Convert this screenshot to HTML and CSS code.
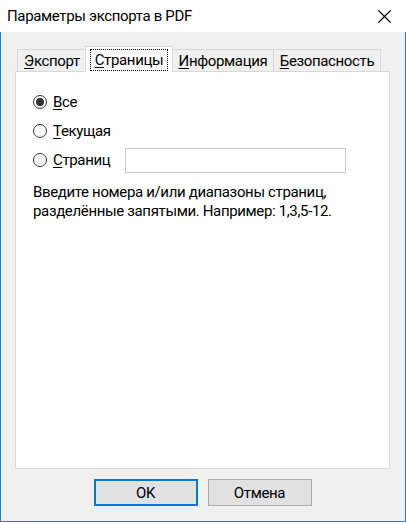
FILE: index.html
```html
<!DOCTYPE html>
<html lang="ru">
<head>
<meta charset="utf-8">
<title>Параметры экспорта в PDF</title>
<link rel="stylesheet" href="styles.css">
</head>
<body>
<div class="window">
  <div class="titlebar">
    <span class="title">Параметры экспорта в PDF</span>
    <svg class="close" width="13" height="13" viewBox="0 0 13 13" aria-hidden="true">
      <path d="M0.5 0.5 L12.5 12.5 M12.5 0.5 L0.5 12.5" stroke="#000" stroke-width="1.1" fill="none"/>
    </svg>
  </div>
  <div class="client">
    <div class="tabs">
      <div class="tab tab-export"><span><u>Э</u>кспорт</span></div>
      <div class="tab tab-pages active"><span class="focus"><u>С</u>траницы</span></div>
      <div class="tab tab-info"><span><u>И</u>нформация</span></div>
      <div class="tab tab-security"><span><u>Б</u>езопасность</span></div>
    </div>
    <div class="panel">
      <div class="row">
        <span class="radio checked"></span><span class="label"><u>В</u>се</span>
      </div>
      <div class="row">
        <span class="radio"></span><span class="label"><u>Т</u>екущая</span>
      </div>
      <div class="row">
        <span class="option-fixed"><span class="radio"></span><span class="label"><u>С</u>траниц</span></span>
        <span class="textbox"></span>
      </div>
      <p class="hint">Введите номера и/или диапазоны страниц,<br>разделённые запятыми. Например: 1,3,5-12.</p>
    </div>
    <div class="buttons">
      <div class="btn default">OK</div>
      <div class="btn">Отмена</div>
    </div>
  </div>
</div>
</body>
</html>
```

FILE: styles.css
```css
html, body {
  margin: 0;
  padding: 0;
  background: #f0f0f0;
}
body {
  font-family: Roboto, "Noto Sans", sans-serif;
  font-size: 15px;
  letter-spacing: -0.35px;
  color: #000;
}
u {
  text-decoration: underline;
  text-underline-offset: 2px;
  text-decoration-thickness: 1px;
}
.window {
  width: 406px;
  height: 522px;
  display: flex;
  flex-direction: column;
}
.titlebar {
  height: 32px;
  flex: 0 0 32px;
  background: #fff;
  display: flex;
  align-items: center;
  justify-content: space-between;
  padding: 0 15px 0 7px;
}
.title {
  font-size: 15px;
}
.close {
  display: block;
}
.client {
  flex: 1;
  background: #f0f0f0;
  border: 1px solid #1883d7;
  border-top: none;
  padding: 14px 15px 0 14px;
  display: flex;
  flex-direction: column;
}
.tabs {
  display: flex;
  align-items: flex-end;
  height: 25px;
  padding-left: 2px;
}
.tab {
  box-sizing: border-box;
  height: 22px;
  border: 1px solid #d9d9d9;
  border-bottom: none;
  background: #f0f0f0;
  display: flex;
  align-items: center;
  justify-content: center;
  line-height: 20px;
}
.tab-export { width: 70px; }
.tab-pages { width: 88px; margin-left: -2px; }
.tab-info { width: 102px; margin-left: -1px; }
.tab-security { width: 108px; margin-left: -1px; }
.tab.active {
  height: 26px;
  margin-bottom: -1px;
  background: #fff;
  position: relative;
  z-index: 1;
  align-items: flex-start;
}
.focus {
  box-sizing: border-box;
  height: 22px;
  margin-top: 2px;
  padding: 0 4px;
  border: 1px dotted #000;
  line-height: 20px;
}
.panel {
  box-sizing: border-box;
  height: 398px;
  background: #fff;
  border: 1px solid #d9d9d9;
  padding: 15px 17px 0 17px;
}
.row {
  height: 29px;
  display: flex;
  align-items: center;
}
.option-fixed {
  width: 92px;
  display: flex;
  align-items: center;
}
.radio {
  box-sizing: border-box;
  width: 14px;
  height: 14px;
  border: 1px solid #333;
  border-radius: 50%;
  background: #fff;
  margin-right: 6px;
  display: flex;
  align-items: center;
  justify-content: center;
}
.radio.checked::after {
  content: "";
  width: 8px;
  height: 8px;
  border-radius: 50%;
  background: #333;
}
.textbox {
  box-sizing: border-box;
  width: 221px;
  height: 25px;
  border: 1px solid #cccccc;
  background: #fff;
  margin-top: 2px;
}
.hint {
  margin: 9px 0 0 0;
  line-height: 19px;
}
.buttons {
  display: flex;
  justify-content: center;
  gap: 10px;
  padding-top: 10px;
}
.btn {
  box-sizing: border-box;
  width: 104px;
  height: 27px;
  border: 1px solid #adadad;
  background: #e1e1e1;
  display: flex;
  align-items: center;
  justify-content: center;
}
.btn.default {
  border: 2px solid #0078d7;
}
```
